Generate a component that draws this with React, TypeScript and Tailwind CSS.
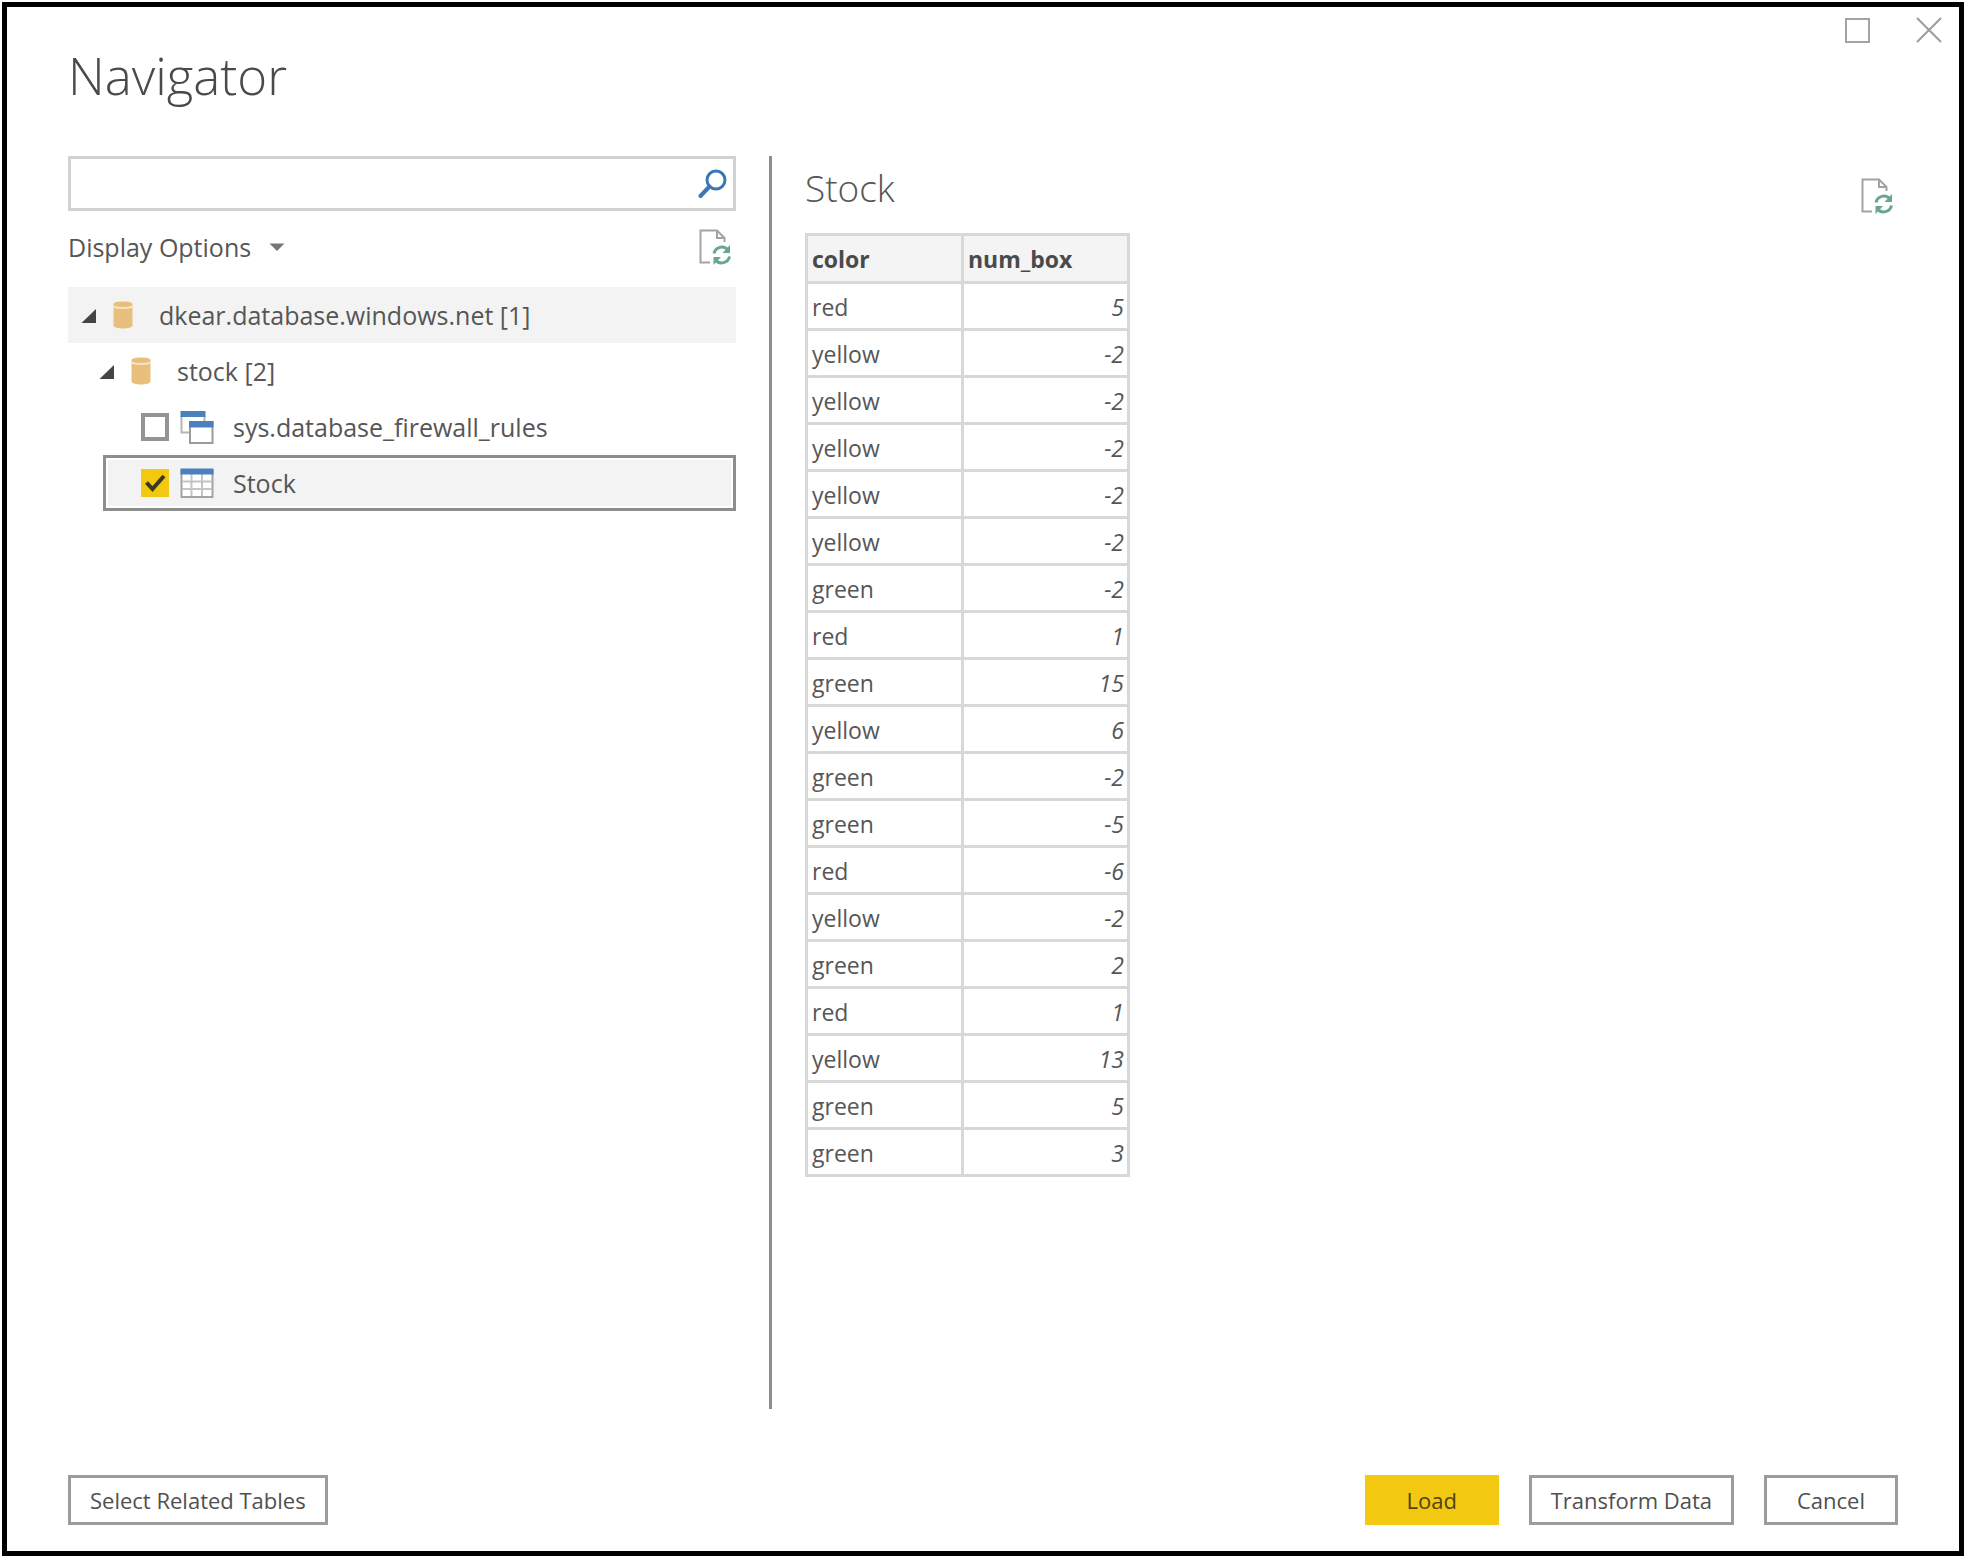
import React, { useState } from "react";

const stockRows: [string, number][] = [
  ["red", 5],
  ["yellow", -2],
  ["yellow", -2],
  ["yellow", -2],
  ["yellow", -2],
  ["yellow", -2],
  ["green", -2],
  ["red", 1],
  ["green", 15],
  ["yellow", 6],
  ["green", -2],
  ["green", -5],
  ["red", -6],
  ["yellow", -2],
  ["green", 2],
  ["red", 1],
  ["yellow", 13],
  ["green", 5],
  ["green", 3],
];

function SearchIcon() {
  return (
    <svg className="h-8 w-8" viewBox="0 0 32 32" fill="none" stroke="#3b76b5" aria-hidden="true">
      <circle cx="19" cy="12" r="9" strokeWidth="3" />
      <path d="M12.5 18.5 3.5 28" strokeWidth="4" strokeLinecap="round" />
    </svg>
  );
}

function RefreshPageIcon() {
  return (
    <svg className="h-9 w-8" viewBox="0 0 32 36" fill="none" aria-hidden="true">
      <path d="M11 33.5H1.500V1.500H18L25.500 9V13" stroke="#a3a3a3" strokeWidth="2" />
      <path d="M18 1.500V9H25.500" stroke="#a3a3a3" strokeWidth="2" />
      <path d="M15 24.500A8 8 0 0 1 29 21" stroke="#6aa58c" strokeWidth="3" />
      <path d="M31 16V24H23.500Z" fill="#6aa58c" />
      <path d="M30.500 27.500A8 8 0 0 1 16.500 31" stroke="#6aa58c" strokeWidth="3" />
      <path d="M14.500 36V28H22Z" fill="#6aa58c" />
    </svg>
  );
}

function Expander() {
  return (
    <svg className="h-4 w-4" viewBox="0 0 16 16" aria-hidden="true">
      <path d="M15 2V16H0.500Z" fill="#444444" />
    </svg>
  );
}

function DatabaseIcon() {
  return (
    <svg className="h-7 w-5" viewBox="0 0 20 28" aria-hidden="true">
      <path d="M0.500 3C0.500 -0.300 19.500 -0.300 19.500 3V24.500C19.500 28.500 0.500 28.500 0.500 24.500Z" fill="#e9bf7e" />
      <path d="M0.500 5.500C4 7.500 16 7.500 19.500 5.500" stroke="#f7e6cb" strokeWidth="2" fill="none" />
    </svg>
  );
}

function ViewIcon() {
  return (
    <svg className="h-[34px] w-[34px]" viewBox="0 0 34 34" aria-hidden="true">
      <path d="M1.500 6V22.500H9" fill="none" stroke="#b5b5b5" strokeWidth="2" />
      <path d="M24.500 6V11" stroke="#b5b5b5" strokeWidth="2" />
      <rect x="0.500" y="1" width="25" height="6" fill="#4a80bb" />
      <rect x="10" y="12" width="22.500" height="21" fill="#ffffff" stroke="#9c9c9c" strokeWidth="2" />
      <rect x="9" y="11" width="24.500" height="6.500" fill="#4a80bb" />
    </svg>
  );
}

function TableIcon() {
  return (
    <svg className="h-[30px] w-[34px]" viewBox="0 0 34 30" aria-hidden="true">
      <rect x="1.500" y="3" width="31" height="26" fill="#ffffff" stroke="#a3a3a3" strokeWidth="2" />
      <path d="M2 13.500H32M2 21H32M11.500 6V28M22 6V28" stroke="#c4c4c4" strokeWidth="2" />
      <rect x="0.500" y="0.500" width="33" height="6" fill="#4a80bb" />
    </svg>
  );
}

function TickBox({ id, checked, onChange }: { id: string; checked: boolean; onChange: () => void }) {
  return (
    <span className="grid h-7 w-7 place-items-center">
      <input
        id={id}
        type="checkbox"
        checked={checked}
        onChange={onChange}
        className="col-start-1 row-start-1 h-7 w-7 appearance-none border-4 border-[#949494] bg-white checked:border-[#f2c811] checked:bg-[#f2c811]"
      />
      {checked && (
        <svg className="pointer-events-none z-10 col-start-1 row-start-1 h-7 w-7" viewBox="0 0 28 28" aria-hidden="true">
          <path d="M5.500 13.500 11.500 20 23 7" fill="none" stroke="#3b3a20" strokeWidth="4" />
        </svg>
      )}
    </span>
  );
}

function DialogButton({ children, primary = false }: { children: React.ReactNode; primary?: boolean }) {
  return (
    <button
      type="button"
      className={
        primary
          ? "h-[50px] min-w-[134px] bg-[#f2c811] px-[19px] text-[22px] leading-7 text-[#4d4410]"
          : "h-[50px] min-w-[134px] border-3 border-[#9c9c9c] bg-white px-[19px] text-[22px] leading-7 text-[#505050]"
      }
    >
      {children}
    </button>
  );
}

export default function App() {
  const [query, setQuery] = useState("");
  const [rules, setRules] = useState(false);
  const [stock, setStock] = useState(true);

  return (
    <div className="flex min-h-screen flex-col bg-white p-[2px] font-['Open_Sans','Noto_Sans',sans-serif] text-[#565656]">
      <div className="flex grow flex-col border-5 border-black">
        <div className="flex h-12 items-center justify-end gap-11 pr-4">
          <button type="button" aria-label="Maximize">
            <svg className="h-7 w-7" viewBox="0 0 28 28" aria-hidden="true">
              <rect x="3" y="2" width="23" height="23" fill="none" stroke="#a3a3a3" strokeWidth="2" />
            </svg>
          </button>
          <button type="button" aria-label="Close">
            <svg className="h-7 w-7" viewBox="0 0 28 28" aria-hidden="true">
              <path d="M2 1 26 25M26 1 2 25" fill="none" stroke="#9c9c9c" strokeWidth="2" />
            </svg>
          </button>
        </div>
        <h1 className="px-[61px] text-[51px] leading-10 font-light text-[#4a4a4a]">Navigator</h1>

        <main className="mt-[61px] flex grow px-[61px]">
          <section className="w-[668px] shrink-0" aria-label="Data sources">
            <div className="flex h-[55px] items-center border-3 border-[#d2d2d2] pr-1">
              <input
                type="text"
                aria-label="Search"
                value={query}
                onChange={(e) => setQuery(e.target.value)}
                className="h-full min-w-0 grow px-2 text-[24px] outline-none"
              />
              <button type="button" aria-label="Search">
                <SearchIcon />
              </button>
            </div>
            <div className="flex h-[76px] items-center justify-between pr-[5px] pb-1">
              <button type="button" className="flex items-center gap-[18px] text-[25px] leading-8">
                Display Options
                <svg className="h-2 w-4" viewBox="0 0 16 8" aria-hidden="true">
                  <path d="M0.500 0.500H15.500L8 8Z" fill="#777777" />
                </svg>
              </button>
              <button type="button" aria-label="Refresh">
                <RefreshPageIcon />
              </button>
            </div>

            <div className="text-[25px] leading-8">
              <button type="button" className="flex h-14 w-full items-center bg-[#f3f3f3] pl-[13px]">
                <Expander />
                <span className="ml-4">
                  <DatabaseIcon />
                </span>
                <span className="ml-[26px]">dkear.database.windows.net [1]</span>
              </button>
              <button type="button" className="flex h-14 w-full items-center pl-[31px]">
                <Expander />
                <span className="ml-4">
                  <DatabaseIcon />
                </span>
                <span className="ml-[26px]">stock [2]</span>
              </button>
              <div className="flex h-14 items-center gap-[11px] pl-[73px]">
                <TickBox id="rules" checked={rules} onChange={() => setRules(!rules)} />
                <label htmlFor="rules" className="flex items-center gap-[19px]">
                  <ViewIcon />
                  sys.database_firewall_rules
                </label>
              </div>
              <div className="ml-[35px] h-14 border-3 border-[#8e8e8e] p-[2px]">
                <div className="flex h-full items-center gap-[11px] bg-[#f3f3f3] pl-[33px]">
                  <TickBox id="stock" checked={stock} onChange={() => setStock(!stock)} />
                  <label htmlFor="stock" className="flex items-center gap-[19px]">
                    <TableIcon />
                    Stock
                  </label>
                </div>
              </div>
            </div>
          </section>

          <section className="ml-[33px] grow border-l-3 border-[#8e8e8e] pl-[33px]" aria-label="Preview">
            <div className="flex h-[77px] items-start justify-between pt-2 pr-[5px]">
              <h2 className="text-[37px] leading-[48px] font-light">Stock</h2>
              <button type="button" aria-label="Refresh preview" className="pt-[14px]">
                <RefreshPageIcon />
              </button>
            </div>
            <table className="w-[325px] table-fixed border-collapse text-[23px] leading-7">
              <thead>
                <tr className="h-12 bg-[#f4f4f4] text-left text-[#4a4a4a]">
                  <th className="w-[156px] border-3 border-[#d8d8d8] px-1 font-bold">color</th>
                  <th className="border-3 border-[#d8d8d8] px-1 font-bold">num_box</th>
                </tr>
              </thead>
              <tbody>
                {stockRows.map(([color, count], i) => (
                  <tr key={i} className="h-[47px]">
                    <td className="border-3 border-[#d8d8d8] px-1 pt-[2px]">{color}</td>
                    <td className="border-3 border-[#d8d8d8] px-[3px] pt-[2px] text-right italic">{count}</td>
                  </tr>
                ))}
              </tbody>
            </table>
          </section>
        </main>

        <footer className="mt-[66px] mb-[26px] flex items-center gap-[30px] px-[61px]">
          <DialogButton>Select Related Tables</DialogButton>
          <span className="grow" />
          <DialogButton primary>Load</DialogButton>
          <DialogButton>Transform Data</DialogButton>
          <DialogButton>Cancel</DialogButton>
        </footer>
      </div>
    </div>
  );
}
